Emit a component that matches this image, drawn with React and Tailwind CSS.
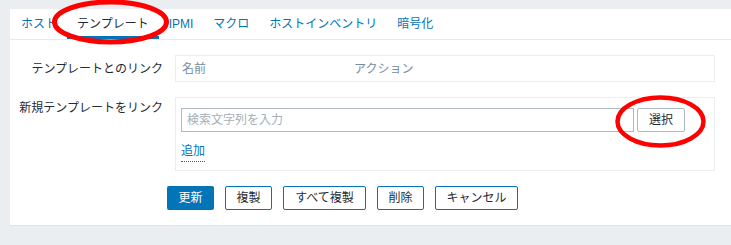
import React from 'react'

const TABS = ['ホスト', 'テンプレート', 'IPMI', 'マクロ', 'ホストインベントリ', '暗号化']
const ACTIONS = ['複製', 'すべて複製', '削除', 'キャンセル']

function Tabs() {
  return (
    <div className="flex h-[31px] border-b border-[#e6eaec] pl-px">
      {TABS.map((tab, i) => (
        <div
          key={tab}
          className={`flex items-center px-[10px] text-[12px] ${
            i === 1 ? 'border-b-[3px] border-[#0275b8] pt-[3px] text-[#1f2c33]' : 'text-[#0275b8]'
          }`}
        >
          {tab}
        </div>
      ))}
    </div>
  )
}

function App() {
  return (
    <div
      className="relative h-[245px] w-[731px] overflow-hidden bg-[#ebeef0] pt-[9px] pl-[10px]"
      style={{ fontFamily: 'Arial, "Noto Sans CJK JP", sans-serif' }}
    >
      <div className="h-[217px] w-[740px] border-b border-[#dfe4e7] bg-white">
        <Tabs />

        {/* form */}
        <div className="grid grid-cols-[153px_540px] gap-x-[12px] pt-[15px] text-[12px] text-[#1f2c33]">
          <div className="flex h-[27px] items-center justify-end">テンプレートとのリンク</div>
          <div className="flex h-[27px] items-center border border-[#ebeef0] px-[6px] text-[#768d99]">
            <span className="w-[172px]">名前</span>
            <span>アクション</span>
          </div>

          <div className="mt-[15px] flex justify-end pt-[2px]">新規テンプレートをリンク</div>
          <div className="mt-[15px] h-[74px] border border-[#ebeef0] px-[5px] pt-[10px]">
            <div className="flex gap-[3px]">
              <div className="flex h-[24px] w-[453px] items-center border border-[#acbbc2] px-[5px] text-[#a5afb4]">
                検索文字列を入力
              </div>
              <div className="flex h-[24px] w-[48px] items-center justify-center rounded-[2px] border border-[#acbbc2] text-[#1f2c33]">
                選択
              </div>
            </div>
            <div className="mt-[10px] inline-block border-b border-dotted border-[#0275b8] pb-[1px] text-[#0275b8]">
              追加
            </div>
          </div>

          <div />
          <div className="flex gap-[11px] pt-[15px] -ml-[8px]">
            <div className="flex h-[24px] w-[47px] items-center justify-center rounded-[2px] bg-[#0275b8] text-white">
              更新
            </div>
            {ACTIONS.map((a, i) => (
              <div
                key={a}
                className={`flex h-[24px] items-center justify-center rounded-[2px] border border-[#0275b8] text-[#1f2c33] ${
                  i === 1 || i === 3 ? 'w-[83px]' : 'w-[47px]'
                }`}
              >
                {a}
              </div>
            ))}
          </div>
        </div>
      </div>

      {/* red annotation ellipses */}
      <svg className="absolute left-0 top-0" width="731" height="245">
        <ellipse cx="110.5" cy="22" rx="56" ry="20" fill="none" stroke="#ff0000" strokeWidth="5" />
        <ellipse cx="660.5" cy="121.5" rx="43" ry="24" fill="none" stroke="#ff0000" strokeWidth="4.5" />
      </svg>
    </div>
  )
}

export default App
